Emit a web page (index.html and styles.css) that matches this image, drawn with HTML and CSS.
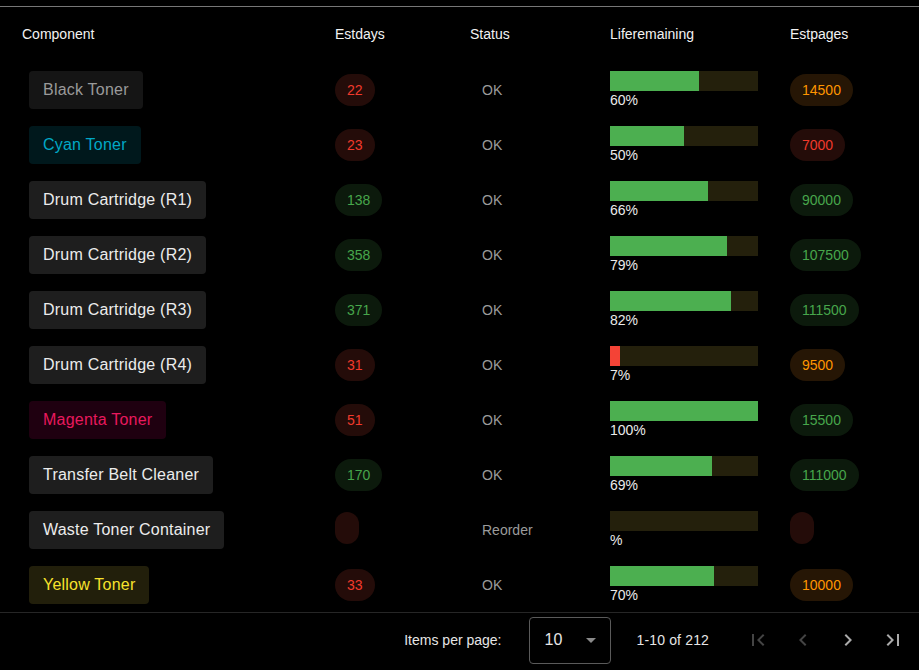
FILE: index.html
```html
<!DOCTYPE html>
<html>
<head>
<meta charset="utf-8">
<link rel="stylesheet" href="styles.css">
</head>
<body>
<div class="table">
  <div class="row head">
    <div>Component</div><div>Estdays</div><div>Status</div><div>Liferemaining</div><div>Estpages</div>
  </div>
  <div class="row">
    <div><span class="chip black">Black Toner</span></div>
    <div><span class="pill red">22</span></div>
    <div class="status">OK</div>
    <div class="life"><div class="bar"><div class="fill" style="width:60%"></div></div><div class="pct">60%</div></div>
    <div><span class="pill orange">14500</span></div>
  </div>
  <div class="row">
    <div><span class="chip cyan">Cyan Toner</span></div>
    <div><span class="pill red">23</span></div>
    <div class="status">OK</div>
    <div class="life"><div class="bar"><div class="fill" style="width:50%"></div></div><div class="pct">50%</div></div>
    <div><span class="pill red">7000</span></div>
  </div>
  <div class="row">
    <div><span class="chip drum">Drum Cartridge (R1)</span></div>
    <div><span class="pill green">138</span></div>
    <div class="status">OK</div>
    <div class="life"><div class="bar"><div class="fill" style="width:66%"></div></div><div class="pct">66%</div></div>
    <div><span class="pill green">90000</span></div>
  </div>
  <div class="row">
    <div><span class="chip drum">Drum Cartridge (R2)</span></div>
    <div><span class="pill green">358</span></div>
    <div class="status">OK</div>
    <div class="life"><div class="bar"><div class="fill" style="width:79%"></div></div><div class="pct">79%</div></div>
    <div><span class="pill green">107500</span></div>
  </div>
  <div class="row">
    <div><span class="chip drum">Drum Cartridge (R3)</span></div>
    <div><span class="pill green">371</span></div>
    <div class="status">OK</div>
    <div class="life"><div class="bar"><div class="fill" style="width:82%"></div></div><div class="pct">82%</div></div>
    <div><span class="pill green">111500</span></div>
  </div>
  <div class="row">
    <div><span class="chip drum">Drum Cartridge (R4)</span></div>
    <div><span class="pill red">31</span></div>
    <div class="status">OK</div>
    <div class="life"><div class="bar"><div class="fill low" style="width:7%"></div></div><div class="pct">7%</div></div>
    <div><span class="pill orange">9500</span></div>
  </div>
  <div class="row">
    <div><span class="chip magenta">Magenta Toner</span></div>
    <div><span class="pill red">51</span></div>
    <div class="status">OK</div>
    <div class="life"><div class="bar"><div class="fill" style="width:100%"></div></div><div class="pct">100%</div></div>
    <div><span class="pill green">15500</span></div>
  </div>
  <div class="row">
    <div><span class="chip drum">Transfer Belt Cleaner</span></div>
    <div><span class="pill green">170</span></div>
    <div class="status">OK</div>
    <div class="life"><div class="bar"><div class="fill" style="width:69%"></div></div><div class="pct">69%</div></div>
    <div><span class="pill green">111000</span></div>
  </div>
  <div class="row">
    <div><span class="chip drum">Waste Toner Container</span></div>
    <div><span class="pill red"></span></div>
    <div class="status">Reorder</div>
    <div class="life"><div class="bar"><div class="fill" style="width:0%"></div></div><div class="pct">%</div></div>
    <div><span class="pill red"></span></div>
  </div>
  <div class="row">
    <div><span class="chip yellow">Yellow Toner</span></div>
    <div><span class="pill red">33</span></div>
    <div class="status">OK</div>
    <div class="life"><div class="bar"><div class="fill" style="width:70%"></div></div><div class="pct">70%</div></div>
    <div><span class="pill orange">10000</span></div>
  </div>
</div>
<div class="footer">
  <span class="ipp">Items per page:</span>
  <div class="select"><span>10</span><svg width="24" height="24" viewBox="0 0 24 24"><path d="M7 10l5 5 5-5z" fill="#8a8a8a"/></svg></div>
  <span class="range">1-10 of 212</span>
  <div class="nav">
    <span class="btn dim"><svg width="24" height="24" viewBox="0 0 24 24"><path d="M18.41 16.59L13.82 12l4.59-4.59L17 6l-6 6 6 6zM6 6h2v12H6z"/></svg></span>
    <span class="btn dim"><svg width="24" height="24" viewBox="0 0 24 24"><path d="M15.41 7.41L14 6l-6 6 6 6 1.41-1.41L10.83 12z"/></svg></span>
    <span class="btn"><svg width="24" height="24" viewBox="0 0 24 24"><path d="M10 6L8.59 7.41 13.17 12l-4.58 4.59L10 18l6-6z"/></svg></span>
    <span class="btn"><svg width="24" height="24" viewBox="0 0 24 24"><path d="M5.59 7.41L10.18 12l-4.59 4.59L7 18l6-6-6-6zM16 6h2v12h-2z"/></svg></span>
  </div>
</div>
</body>
</html>
```
FILE: styles.css
```css
html, body {
  margin: 0;
  background: #000;
  font-family: "Liberation Sans", Arial, sans-serif;
  color: #e6e6e6;
}
body {
  padding-top: 6px;
  width: 919px;
  height: 670px;
  overflow: hidden;
  box-sizing: border-box;
}
.table {
  border-top: 1px solid #777;
}
.row {
  display: grid;
  grid-template-columns: 313px 135px 140px 180px 1fr;
  height: 55px;
  align-items: center;
  padding-left: 22px;
  font-size: 14px;
}
.row.head {
  color: #f2f2f2;
  padding-bottom: 1px;
  box-sizing: border-box;
}
.chip {
  display: inline-flex;
  align-items: center;
  height: 38px;
  padding: 0 14px;
  margin-left: 7px;
  border-radius: 4px;
  font-size: 16px;
  letter-spacing: 0.22px;
  box-sizing: border-box;
}
.chip.black { background: #151515; color: #9a9a9a; }
.chip.cyan { background: #00181c; color: #00a8c6; }
.chip.drum { background: #1e1e1e; color: #ececec; }
.chip.magenta { background: #1f0010; color: #e8195d; }
.chip.yellow { background: #221f0b; color: #f7e22c; }
.pill {
  display: inline-flex;
  align-items: center;
  height: 32px;
  min-width: 24px;
  padding: 0 12px;
  border-radius: 16px;
  box-sizing: border-box;
  font-size: 14px;
}
.pill.red { background: #240c09; color: #f03a2c; }
.pill.green { background: #0c1a0c; color: #47a64b; }
.pill.orange { background: #261605; color: #ff9500; }
.status {
  padding-left: 12px;
  color: #9b9b9b;
}
.life {
  display: flex;
  flex-direction: column;
}
.bar {
  width: 148px;
  height: 20px;
  background: #24200c;
}
.fill {
  height: 100%;
  background: #4caf50;
}
.fill.low { background: #f44336; }
.pct {
  color: #eaeaea;
  line-height: 18px;
}
.footer {
  border-top: 1px solid #262626;
  height: 57px;
  display: flex;
  align-items: center;
  justify-content: flex-end;
  padding-right: 4px;
  padding-bottom: 2px;
  box-sizing: border-box;
  font-size: 14px;
  color: #e6e6e6;
}
.ipp { margin-right: 27px; }
.select {
  width: 82px;
  height: 47px;
  box-sizing: border-box;
  border: 1px solid #5a5a5a;
  border-radius: 4px;
  display: flex;
  align-items: center;
  padding-left: 15px;
  font-size: 16px;
  color: #e6e6e6;
}
.select svg { margin-left: 17px; }
.range { margin-left: 26px; margin-right: 26px; letter-spacing: 0.15px; }
.nav { display: flex; }
.btn {
  width: 45px;
  height: 40px;
  display: flex;
  align-items: center;
  justify-content: center;
  fill: #aaaaaa;
}
.btn.dim { fill: #444; }
```
